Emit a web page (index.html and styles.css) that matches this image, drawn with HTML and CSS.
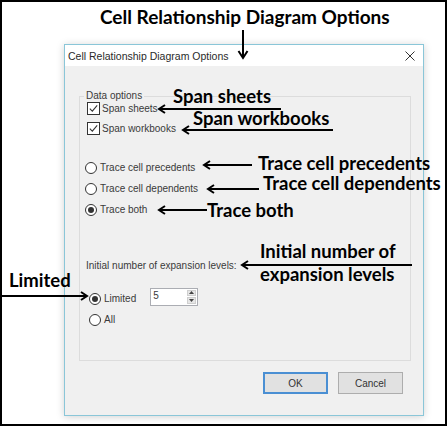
FILE: index.html
```html
<!DOCTYPE html>
<html lang="en">
<head>
<meta charset="utf-8">
<title>Cell Relationship Diagram Options</title>
<link rel="stylesheet" href="styles.css">
</head>
<body>
<div class="frame">
  <div class="dialog">
    <div class="titlebar">
      <span class="title">Cell Relationship Diagram Options</span>
      <svg class="close" width="10" height="10" viewBox="0 0 10 10"><path d="M0.5 0.5L9.5 9.5M9.5 0.5L0.5 9.5" stroke="#333" stroke-width="1" fill="none"/></svg>
    </div>
    <div class="body">
      <fieldset class="group">
        <legend>Data options</legend>
        <div class="checks">
          <div class="row"><span class="check"><svg width="9" height="9" viewBox="0 0 9 9"><path d="M0.8 4.6L3.3 7.1L8.2 1.4" stroke="#333" stroke-width="1.1" fill="none"/></svg></span>Span sheets</div>
          <div class="row"><span class="check"><svg width="9" height="9" viewBox="0 0 9 9"><path d="M0.8 4.6L3.3 7.1L8.2 1.4" stroke="#333" stroke-width="1.1" fill="none"/></svg></span>Span workbooks</div>
        </div>
        <div class="trace">
          <div class="row rrow"><span class="radio"></span>Trace cell precedents</div>
          <div class="row rrow"><span class="radio"></span>Trace cell dependents</div>
          <div class="row rrow"><span class="radio on"></span>Trace both</div>
        </div>
        <div class="levels-label">Initial number of expansion levels:</div>
        <div class="levels">
          <div class="row rrow"><span class="radio on"></span>Limited
            <div class="spin">
              <span class="spin-value">5</span>
              <span class="spin-btns">
                <span class="spin-btn"><svg width="5" height="3" viewBox="0 0 5 3"><path d="M0 3L2.5 0L5 3Z" fill="#444"/></svg></span>
                <span class="spin-btn"><svg width="5" height="3" viewBox="0 0 5 3"><path d="M0 0L2.5 3L5 0Z" fill="#444"/></svg></span>
              </span>
            </div>
          </div>
          <div class="row rrow"><span class="radio"></span>All</div>
        </div>
      </fieldset>
      <div class="buttons">
        <button class="btn btn-default">OK</button>
        <button class="btn">Cancel</button>
      </div>
    </div>
  </div>

  <div class="notes">
    <svg class="arrows" width="447" height="426" viewBox="0 0 447 426">
      <g stroke="#000" stroke-width="2" fill="none">
        <line x1="243" y1="30" x2="243" y2="58"/>
        <polyline points="238.5,51 243,58 247.5,51"/>
        <line x1="159" y1="109" x2="281" y2="109"/>
        <polyline points="165,105 159,109 165,113"/>
        <line x1="183" y1="130" x2="333" y2="130"/>
        <polyline points="189,126 183,130 189,134"/>
        <line x1="204" y1="165" x2="252" y2="165"/>
        <polyline points="210,161 204,165 210,169"/>
        <line x1="208" y1="189" x2="259" y2="189"/>
        <polyline points="214,185 208,189 214,193"/>
        <line x1="159" y1="210" x2="207" y2="210"/>
        <polyline points="165,206 159,210 165,214"/>
        <line x1="242" y1="265" x2="412" y2="265"/>
        <polyline points="248,261 242,265 248,269"/>
        <line x1="0" y1="296" x2="87" y2="296"/>
        <polyline points="81,292 87,296 81,300"/>
      </g>
    </svg>
    <div class="note n-heading">Cell Relationship Diagram Options</div>
    <div class="note n-sheets">Span sheets</div>
    <div class="note n-workbooks">Span workbooks</div>
    <div class="note n-prec">Trace cell precedents</div>
    <div class="note n-dep">Trace cell dependents</div>
    <div class="note n-both">Trace both</div>
    <div class="note n-init">Initial number of</div>
    <div class="note n-exp">expansion levels</div>
    <div class="note n-limited">Limited</div>
  </div>
</div>
</body>
</html>
```

FILE: styles.css
```css
html, body {
  margin: 0;
  padding: 0;
  background: #fff;
}

.frame {
  position: relative;
  box-sizing: border-box;
  width: 447px;
  height: 426px;
  border: 2px solid #000;
  padding: 42px 0 0 62px;
  background: #fff;
}

.dialog {
  box-sizing: border-box;
  width: 360px;
  height: 372px;
  border: 1px solid #8ac6d8;
  background: #f0f0f0;
  box-shadow: 0 1px 8px rgba(0, 0, 0, 0.18);
  display: flex;
  flex-direction: column;
  font-family: "Liberation Sans", Arial, sans-serif;
  font-size: 10px;
  color: #3a3a3a;
}

.titlebar {
  height: 21px;
  background: #fff;
  display: flex;
  align-items: center;
  justify-content: space-between;
  padding: 0 8px 0 3px;
}

.title {
  font-size: 10.5px;
  color: #2a2a2a;
}

.close {
  display: block;
}

.body {
  padding: 0 12px 0 14px;
}

.group {
  margin: 24px 0 0 0;
  padding: 0 0 30px 0;
  border: 1px solid #dcdcdc;
  min-width: 0;
}

.group legend {
  margin-left: 4px;
  padding: 0 2px;
  line-height: 12px;
  font-size: 10px;
}

.row {
  display: flex;
  align-items: center;
  height: 20px;
  white-space: nowrap;
}

.rrow {
  height: 21px;
}

.checks {
  margin-top: -4px;
  padding-left: 7px;
}

.check {
  box-sizing: border-box;
  width: 13px;
  height: 13px;
  border: 1px solid #333;
  background: #fff;
  margin-right: 2px;
  display: flex;
  align-items: center;
  justify-content: center;
}

.check svg {
  display: block;
}

.trace {
  margin-top: 19px;
  padding-left: 5px;
}

.radio {
  box-sizing: border-box;
  width: 12px;
  height: 12px;
  border: 1px solid #333;
  border-radius: 50%;
  background: #fff;
  margin-right: 3px;
  display: flex;
  align-items: center;
  justify-content: center;
}

.radio.on::after {
  content: "";
  width: 6px;
  height: 6px;
  border-radius: 50%;
  background: #333;
}

.levels-label {
  margin-top: 40px;
  padding-left: 6px;
  line-height: 12px;
}

.levels {
  margin-top: 16px;
  padding-left: 9px;
}

.spin {
  box-sizing: border-box;
  width: 48px;
  height: 18px;
  margin-left: 14px;
  margin-bottom: 4px;
  border: 1px solid #abadb3;
  background: #fff;
  display: flex;
  justify-content: space-between;
}

.spin-value {
  padding: 1px 0 0 2px;
  line-height: 12px;
}

.spin-btns {
  display: flex;
  flex-direction: column;
  gap: 1px;
  padding: 1px;
}

.spin-btn {
  width: 9px;
  flex: 1;
  background: #e6e6e6;
  border: 1px solid #cfcfcf;
  box-sizing: border-box;
  display: flex;
  align-items: center;
  justify-content: center;
}

.spin-btn svg {
  display: block;
}

.buttons {
  display: flex;
  justify-content: flex-end;
  gap: 10px;
  margin-top: 11px;
  padding-right: 8px;
}

.btn {
  box-sizing: border-box;
  width: 65px;
  height: 22px;
  padding: 0;
  border: 1px solid #adadad;
  background: #e1e1e1;
  font-family: inherit;
  font-size: 10px;
  color: #333;
}

.btn-default {
  border: 2px solid #4a8fd3;
}

.notes {
  position: absolute;
  left: -2px;
  top: -2px;
  width: 447px;
  height: 426px;
  pointer-events: none;
}

.arrows {
  position: absolute;
  left: 0;
  top: 0;
}

.note {
  position: absolute;
  font-family: Lato, "Open Sans", sans-serif;
  font-weight: 700;
  font-size: 18.5px;
  line-height: 1;
  color: #000;
  white-space: nowrap;
}

.n-heading { left: 100px; top: 7px; font-size: 19px; }
.n-sheets { left: 173px; top: 87px; }
.n-workbooks { left: 193px; top: 109px; }
.n-prec { left: 258px; top: 154px; }
.n-dep { left: 263px; top: 174px; }
.n-both { left: 207px; top: 201px; }
.n-init { left: 260px; top: 242px; }
.n-exp { left: 260px; top: 265px; }
.n-limited { left: 9px; top: 271px; }
```
